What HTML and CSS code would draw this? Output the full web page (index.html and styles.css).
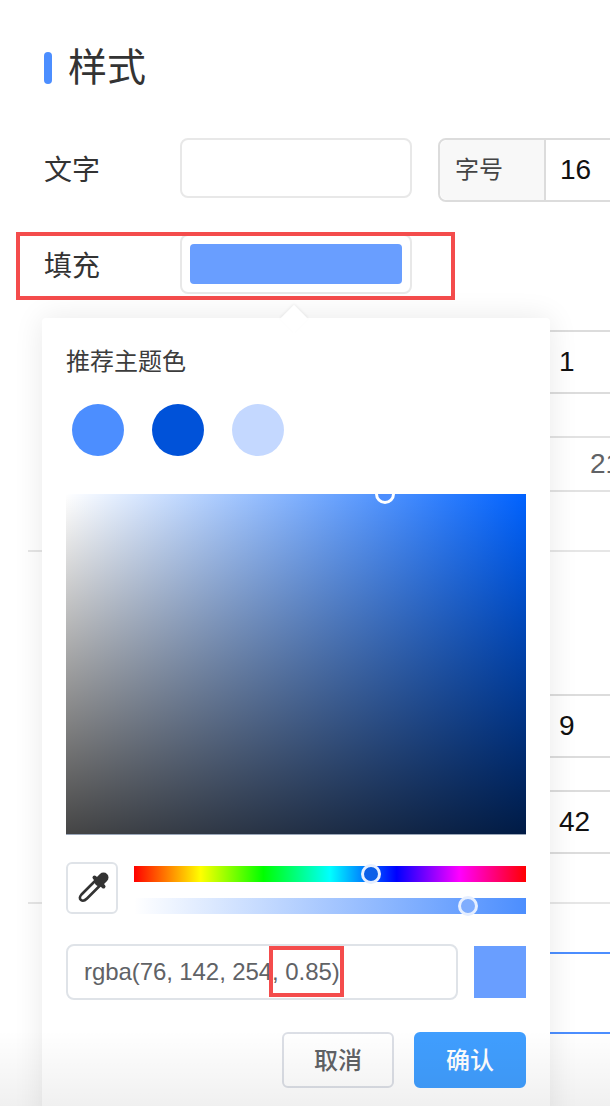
FILE: index.html
```html
<!DOCTYPE html>
<html lang="zh-CN">
<head>
  <meta charset="UTF-8" />
  <title>样式</title>
  <link rel="stylesheet" href="styles.css">
</head>
<body>
  <div class="page">
    <h2 class="title"><span class="title-bar"></span>样式</h2>

    <div class="row row-text">
      <span class="label">文字</span>
      <div class="swatch-box"></div>
      <div class="num-group num-group-first">
        <span class="addon">字号</span>
        <span class="num">16</span>
      </div>
    </div>

    <div class="row row-fill">
      <span class="label">填充</span>
      <div class="swatch-box"><div class="swatch-fill"></div></div>
    </div>

    <div class="num-row num-row-1"><span class="num">1</span></div>
    <div class="num-row num-row-2"><span class="num num-gray">21</span></div>
    <div class="sep sep-1"></div>
    <div class="num-row num-row-3"><span class="num">9</span></div>
    <div class="num-row num-row-4"><span class="num">42</span></div>
    <div class="sep sep-2"></div>
    <div class="blue-line blue-line-1"></div>
    <div class="blue-line blue-line-2"></div>

    <!-- color picker popover -->
    <div class="picker">
      <div class="picker-title">推荐主题色</div>
      <div class="theme-colors">
        <span class="dot dot-1"></span>
        <span class="dot dot-2"></span>
        <span class="dot dot-3"></span>
      </div>
      <div class="sat-panel"><span class="thumb sat-thumb"></span></div>
      <div class="sliders">
        <button class="dropper">
          <svg width="48" height="48" viewBox="0 0 48 48">
            <g transform="translate(0.5 -1.5)">
              <path d="M27.5 17.5 L13 32 Q10 35.5 12.5 37.5 Q15 39.5 18.5 36 L32.5 22" fill="none" stroke="#333" stroke-width="2.6" stroke-linecap="round"/>
              <path d="M26 15 L35 24" stroke="#333" stroke-width="4" stroke-linecap="round"/>
              <path d="M31 19 L35 15" stroke="#333" stroke-width="10" stroke-linecap="round"/>
            </g>
          </svg>
        </button>
        <div class="slider-col">
          <div class="slider hue"><span class="thumb hue-thumb"></span></div>
          <div class="slider alpha"><span class="thumb alpha-thumb"></span></div>
        </div>
      </div>
      <div class="value-row">
        <div class="value-input">rgba(76, 142, 254, 0.85)</div>
        <div class="preview"></div>
      </div>
      <div class="actions">
        <button class="btn">取消</button>
        <button class="btn btn-primary">确认</button>
      </div>
      <div class="mark"></div>
    </div>

    <div class="fade"></div>
  </div>
</body>
</html>
```

FILE: styles.css
```css
*,
*::before,
*::after {
  box-sizing: border-box;
}

body {
  margin: 0;
  background: #fff;
  font-family: "Liberation Sans", "Noto Sans CJK SC", sans-serif;
  color: #333;
}

.page {
  position: relative;
  width: 610px;
  height: 1106px;
  overflow: hidden;
  padding-top: 44px;
}

.title {
  display: flex;
  align-items: center;
  height: 48px;
  margin: 0 0 46px 44px;
  font-size: 39px;
  line-height: 50px;
  font-weight: 400;
}

.title-bar {
  width: 8px;
  height: 32px;
  margin-right: 16px;
  border-radius: 4px;
  background: #4c8eff;
}

.row {
  display: flex;
  align-items: flex-start;
  width: 800px;
}

.label {
  flex: none;
  width: 136px;
  margin-left: 44px;
  font-size: 28px;
  line-height: 66px;
}

.row-text {
  height: 64px;
  margin-bottom: 32px;
}

.row-fill {
  height: 60px;
}

.row-fill::after {
  content: "";
  position: absolute;
  left: 16px;
  top: 232px;
  width: 439px;
  height: 68px;
  border: 4px solid #f44c4c;
}

.swatch-box {
  flex: none;
  width: 232px;
  height: 60px;
  padding: 8px;
  border: 2px solid #e8e8e8;
  border-radius: 8px;
}

.swatch-fill {
  height: 40px;
  border-radius: 4px;
  background: #699eff;
}

.num-group {
  display: flex;
  flex: none;
  align-items: center;
  width: 300px;
  height: 64px;
  border: 2px solid #dcdcdc;
  border-radius: 8px;
}

.num-group-first {
  margin-left: 26px;
}

.addon {
  width: 106px;
  height: 100%;
  padding-left: 15px;
  border-right: 2px solid #dcdcdc;
  border-radius: 8px 0 0 8px;
  background: #f8f8f8;
  font-size: 24px;
  line-height: 60px;
  color: #444;
}

.num {
  padding-left: 14px;
  font-size: 28px;
  line-height: 60px;
  color: #111;
}

.num-row {
  display: flex;
  align-items: center;
  width: 300px;
  margin-left: 545px;
  border-top: 2px solid #dcdcdc;
  border-bottom: 2px solid #dcdcdc;
}

.num-row-1 {
  height: 64px;
  margin-top: 36px;
}

.num-row-2 {
  height: 56px;
  margin-top: 42px;
  border-color: #e2e2e2;
}

.num-row-2 .num {
  padding-left: 45px;
}

.num-gray {
  color: #606266;
}

.num-row-3 {
  height: 64px;
  margin-top: 142px;
}

.num-row-4 {
  height: 64px;
  margin-top: 32px;
}

.sep {
  width: 582px;
  height: 2px;
  margin-left: 28px;
  background: #e6e6e6;
}

.sep-1 {
  margin-top: 58px;
}

.sep-2 {
  margin-top: 48px;
}

.blue-line {
  width: 100px;
  height: 2px;
  margin-left: 520px;
  background: #4c8eff;
}

.blue-line-1 {
  margin-top: 48px;
}

.blue-line-2 {
  margin-top: 78px;
}

.picker {
  position: absolute;
  left: 42px;
  top: 318px;
  width: 508px;
  height: 820px;
  padding: 24px;
  border-radius: 4px;
  background: #fff;
  box-shadow: 0 0 30px rgba(0, 0, 0, 0.09);
}

.picker::before {
  content: "";
  position: absolute;
  left: 242px;
  top: -9px;
  width: 20px;
  height: 20px;
  background: #fff;
  box-shadow: -1px -1px 3px rgba(0, 0, 0, 0.06);
  transform: rotate(45deg);
}

.picker-title {
  position: relative;
  height: 40px;
  font-size: 24px;
  line-height: 40px;
  color: #3c3c3c;
}

.theme-colors {
  display: flex;
  gap: 28px;
  margin: 22px 0 38px 6px;
}

.dot {
  width: 52px;
  height: 52px;
  border-radius: 50%;
}

.dot-1 {
  background: #4c8eff;
}

.dot-2 {
  background: #0052d9;
}

.dot-3 {
  background: #c4d8ff;
}

.sat-panel {
  position: relative;
  width: 460px;
  height: 341px;
  overflow: hidden;
  border-bottom: 1px solid #9aa6b8;
  background-image:
    linear-gradient(to top, rgba(0, 0, 0, 0.73), rgba(0, 0, 0, 0)),
    linear-gradient(to right, #fff, #0062ff);
}

.thumb {
  position: absolute;
  width: 20px;
  height: 20px;
  border: 3px solid #fff;
  border-radius: 50%;
}

.sat-thumb {
  left: 309px;
  top: -10px;
  background: #4c8efe;
}

.sliders {
  display: flex;
  gap: 16px;
  margin-top: 27px;
}

.dropper {
  width: 52px;
  height: 52px;
  padding: 0;
  border: 2px solid #dfe3e8;
  border-radius: 6px;
  background: #fff;
}

.dropper svg {
  display: block;
}

.slider-col {
  display: flex;
  flex-direction: column;
  gap: 16px;
  width: 392px;
  padding-top: 4px;
}

.slider {
  position: relative;
  height: 16px;
}

.hue {
  background: linear-gradient(to right, #f00 0%, #ff0 17%, #0f0 33%, #0ff 50%, #00f 67%, #f0f 83%, #f00 100%);
}

.alpha {
  background: linear-gradient(to right, rgba(76, 142, 254, 0), #4c8efe);
}

.hue-thumb {
  left: 227px;
  top: -2px;
  border-color: #e6efff;
  background: #0b5fe8;
}

.alpha-thumb {
  left: 324px;
  top: -2px;
  border-color: #e6efff;
  background: #7fadfe;
}

.value-row {
  display: flex;
  align-items: center;
  gap: 16px;
  margin-top: 30px;
}

.value-input {
  width: 392px;
  height: 56px;
  padding-left: 16px;
  border: 2px solid #dfe3e8;
  border-radius: 8px;
  font-size: 24px;
  letter-spacing: -0.08px;
  line-height: 52px;
  color: #606266;
}

.preview {
  width: 52px;
  height: 52px;
  background: #699eff;
}

.actions {
  display: flex;
  justify-content: flex-end;
  gap: 20px;
  width: 460px;
  margin-top: 32px;
}

.btn {
  width: 112px;
  height: 56px;
  padding: 0 0 3px;
  border: 2px solid #dcdfe6;
  border-radius: 6px;
  background: #fff;
  font-family: inherit;
  font-size: 24px;
  font-weight: 500;
  color: #606266;
}

.btn-primary {
  border-color: #409eff;
  background: #409eff;
  color: #fff;
}

.mark {
  position: absolute;
  left: 227px;
  top: 628px;
  width: 75px;
  height: 51px;
  border: 4px solid #f44c4c;
}

.fade {
  position: absolute;
  left: 0;
  right: 0;
  bottom: 0;
  height: 76px;
  background: linear-gradient(to bottom, rgba(0, 0, 0, 0), rgba(0, 0, 0, 0.06));
  pointer-events: none;
}
```
